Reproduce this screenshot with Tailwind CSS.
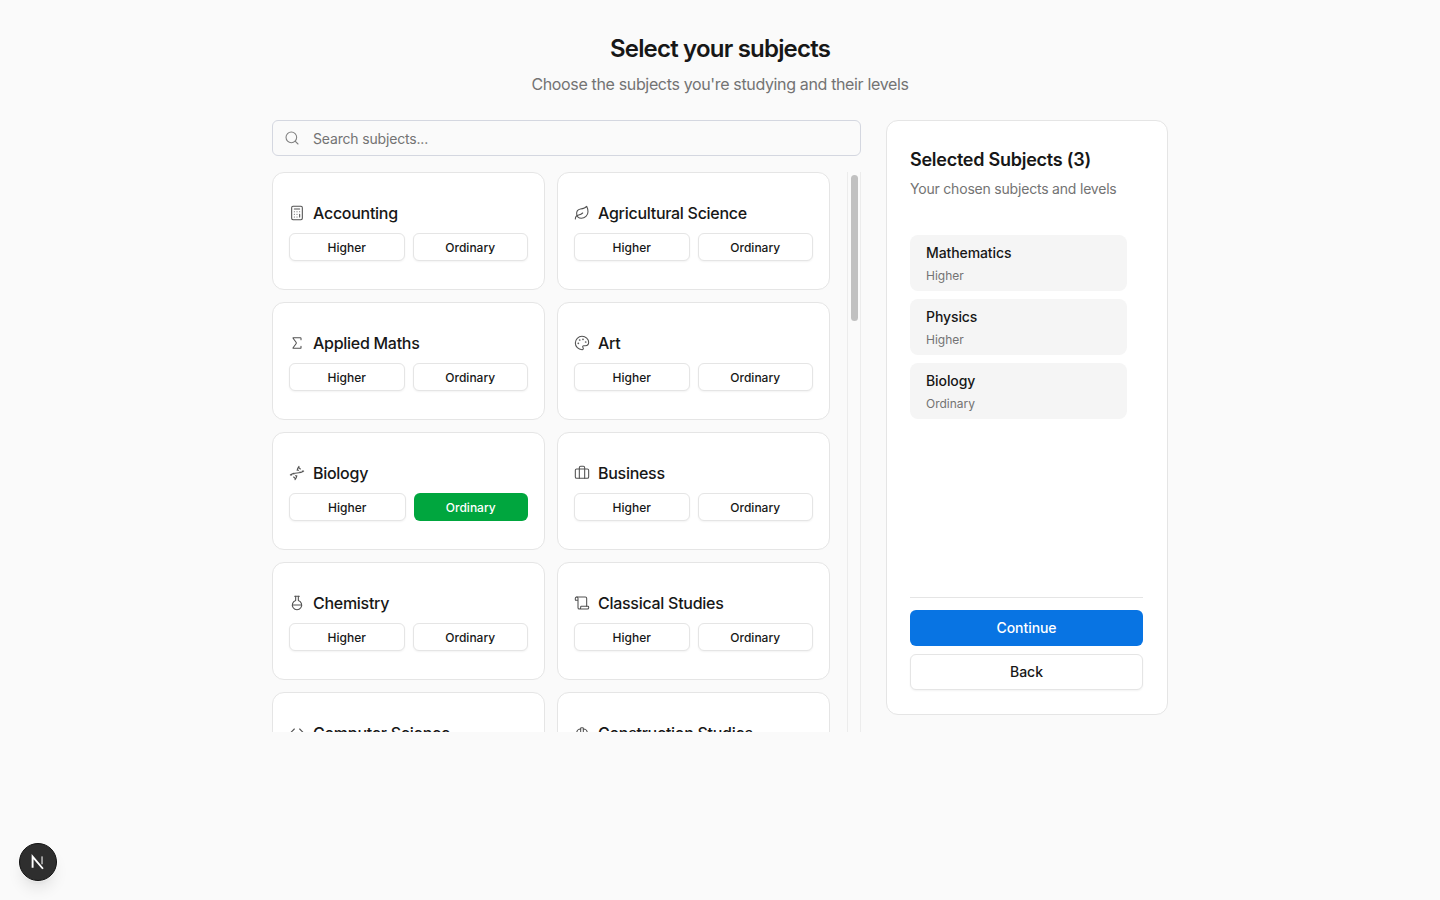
<!DOCTYPE html>
<html lang="en">
<head>
  <meta charset="UTF-8" />
  <meta name="viewport" content="width=device-width, initial-scale=1.0" />
  <title>Select your subjects</title>
  <script src="https://cdn.jsdelivr.net/npm/@tailwindcss/browser@4"></script>
</head>
<body class="bg-[#fafafa] font-['Inter',sans-serif] text-[#171717]">

  <main class="w-[896px] h-[900px] mx-auto pt-[33px]">

    <!-- Title -->
    <header class="text-center mb-6">
      <h1 class="text-2xl font-semibold leading-8 tracking-[-0.8px]">Select your subjects</h1>
      <p class="mt-[7px] text-base leading-6 tracking-[-0.35px] text-[#737373]">Choose the subjects you're studying and their levels</p>
    </header>

    <div class="flex items-start gap-[25px]">

      <!-- Subject picker -->
      <section class="w-[589px] shrink-0">
        <div class="flex items-center h-9 mb-4 pl-[11px] pr-3 border border-[#d4d7e0] rounded-md">
          <svg class="size-4 shrink-0 text-[#808080]" viewBox="0 0 24 24" fill="none" stroke="currentColor" stroke-width="1.6" stroke-linecap="round" stroke-linejoin="round"><path d="m21 21-4.34-4.34"/><circle cx="11" cy="11" r="8"/></svg>
          <input type="text" placeholder="Search subjects..." class="ml-[13px] pt-[2px] flex-1 bg-transparent text-sm tracking-[-0.17px] outline-none placeholder:text-[#737373]" />
        </div>

        <div class="flex h-[560px]">
          <div class="flex-1 min-w-0 overflow-hidden pr-[17px]">
            <div id="subjects" class="grid grid-cols-2 gap-3"></div>
          </div>
          <!-- Scrollbar -->
          <div class="w-[14px] shrink-0 pl-[3px] pr-[2px] pt-[3px] border-x border-[#ececec]">
            <div class="h-[146px] rounded-full bg-[#c1c1c1]"></div>
          </div>
        </div>
      </section>

      <!-- Selected subjects -->
      <aside class="flex flex-col w-[282px] h-[595px] pl-[23px] pr-6 pt-[25px] pb-6 bg-white border border-[#e5e5e5] rounded-xl">
        <h2 class="text-lg font-semibold leading-7 tracking-[-0.25px]">Selected Subjects (3)</h2>
        <p class="mt-[5px] text-sm leading-5 tracking-[-0.2px] text-[#737373]">Your chosen subjects and levels</p>

        <ul class="flex-1 mt-[36px] space-y-2">
          <li class="w-[217px] h-14 px-4 pt-2 bg-[#f5f5f5] rounded-lg">
            <p class="text-sm font-medium leading-5 tracking-[-0.1px]">Mathematics</p>
            <p class="mt-[5px] text-xs leading-4 text-[#737373]">Higher</p>
          </li>
          <li class="w-[217px] h-14 px-4 pt-2 bg-[#f5f5f5] rounded-lg">
            <p class="text-sm font-medium leading-5 tracking-[-0.1px]">Physics</p>
            <p class="mt-[5px] text-xs leading-4 text-[#737373]">Higher</p>
          </li>
          <li class="w-[217px] h-14 px-4 pt-2 bg-[#f5f5f5] rounded-lg">
            <p class="text-sm font-medium leading-5 tracking-[-0.1px]">Biology</p>
            <p class="mt-[5px] text-xs leading-4 text-[#737373]">Ordinary</p>
          </li>
        </ul>

        <div class="pt-3 border-t border-[#e5e5e5] space-y-2">
          <button class="block w-full h-9 rounded-md bg-[#0874e3] text-sm font-medium tracking-[-0.05px] text-white">Continue</button>
          <button class="block w-full h-9 rounded-md bg-white border border-[#e5e5e5] shadow-xs text-sm font-medium tracking-[-0.05px]">Back</button>
        </div>
      </aside>
    </div>
  </main>

  <!-- Next.js dev badge -->
  <div class="fixed left-[19px] bottom-[19px] flex items-center justify-center size-[38px] rounded-full bg-[#2e2e2e] border border-[#111] ring-1 ring-white/30 shadow-lg">
    <svg class="size-[18px]" viewBox="0 0 16 16" fill="none" stroke-width="1.7">
      <path d="M3.2 13V3.2L12.4 14" stroke="#fff"/>
      <path d="M11.6 3v7" stroke="#fff" stroke-opacity=".55"/>
    </svg>
  </div>

  <script>
    const icons = {
      calculator: '<rect width="16" height="20" x="4" y="2" rx="2"/><path d="M8 6h8M16 14v4M16 10h.01M12 10h.01M8 10h.01M12 14h.01M8 14h.01M12 18h.01M8 18h.01"/>',
      leaf: '<path d="M11 20A7 7 0 0 1 9.8 6.1C15.5 5 17 4.48 19 2c1 2 2 4.18 2 8 0 5.5-4.78 10-10 10Z"/><path d="M2 21c0-3 1.85-5.36 5.08-6C9.5 14.52 12 13 13 12"/>',
      sigma: '<path d="M18 7V5a1 1 0 0 0-1-1H6.5a.5.5 0 0 0-.4.8l4.5 6a2 2 0 0 1 0 2.4l-4.5 6a.5.5 0 0 0 .4.8H17a1 1 0 0 0 1-1v-2"/>',
      palette: '<path d="M12 22a1 1 0 0 1 0-20 10 9 0 0 1 10 9 5 5 0 0 1-5 5h-2.25a1.75 1.75 0 0 0-1.4 2.8l.3.4a1.75 1.75 0 0 1-1.4 2.8z"/><circle cx="13.5" cy="6.5" r=".5"/><circle cx="17.5" cy="10.5" r=".5"/><circle cx="6.5" cy="12.5" r=".5"/><circle cx="8.5" cy="7.5" r=".5"/>',
      dna: '<path d="m10 16 1.5 1.5M14 8l-1.5-1.5M15 2c-1.798 1.998-2.518 3.995-2.807 5.993M16.5 10.5l1 1M17 6l-2.891-2.891M2 15c6.667-6 13.333 0 20-6M20 9l.891.891M3.109 14.109 4 15M6.5 12.5l1 1M7 18l2.891 2.891M9 22c1.798-1.998 2.518-3.995 2.807-5.993"/>',
      briefcase: '<path d="M16 20V4a2 2 0 0 0-2-2h-4a2 2 0 0 0-2 2v16"/><rect width="20" height="14" x="2" y="6" rx="2"/>',
      flask: '<path d="M10 2v6.292a7 7 0 1 0 4 0V2"/><path d="M5 15h14"/><path d="M8.5 2h7"/>',
      scroll: '<path d="M19 17V5a2 2 0 0 0-2-2H4"/><path d="M8 21h12a2 2 0 0 0 2-2v-1a1 1 0 0 0-1-1H11a1 1 0 0 0-1 1v1a2 2 0 1 1-4 0V5a2 2 0 1 0-4 0v2a1 1 0 0 0 1 1h3"/>',
      code: '<path d="m16 18 6-6-6-6"/><path d="m8 6-6 6 6 6"/>',
      hardhat: '<path d="M10 10V5a1 1 0 0 1 1-1h2a1 1 0 0 1 1 1v5"/><path d="M14 6a6 6 0 0 1 6 6v3"/><path d="M4 15v-3a6 6 0 0 1 6-6"/><rect x="2" y="15" width="20" height="4" rx="1"/>'
    };

    const subjects = [
      { name: "Accounting", icon: "calculator" },
      { name: "Agricultural Science", icon: "leaf" },
      { name: "Applied Maths", icon: "sigma" },
      { name: "Art", icon: "palette" },
      { name: "Biology", icon: "dna", level: "Ordinary" },
      { name: "Business", icon: "briefcase" },
      { name: "Chemistry", icon: "flask" },
      { name: "Classical Studies", icon: "scroll" },
      { name: "Computer Science", icon: "code" },
      { name: "Construction Studies", icon: "hardhat" }
    ];

    const levelButton = (label, active) => active
      ? `<button class="flex-1 h-7 px-3 pt-[2px] rounded-md bg-[#00a63e] text-xs font-medium text-white">${label}</button>`
      : `<button class="flex-1 h-7 px-3 pt-[2px] rounded-md bg-white border border-[#e5e5e5] shadow-xs text-xs font-medium">${label}</button>`;

    document.getElementById("subjects").innerHTML = subjects.map(s => `
      <article class="h-[118px] px-4 py-7 bg-white border border-[#e5e5e5] rounded-xl">
        <div class="flex items-center gap-2 h-6 mb-2">
          <svg class="size-4 shrink-0 text-[#525252]" viewBox="0 0 24 24" fill="none" stroke="currentColor" stroke-width="1.6" stroke-linecap="round" stroke-linejoin="round">${icons[s.icon]}</svg>
          <h3 class="text-base font-medium leading-6 tracking-[-0.28px]">${s.name}</h3>
        </div>
        <div class="flex gap-2">
          ${levelButton("Higher", s.level === "Higher")}
          ${levelButton("Ordinary", s.level === "Ordinary")}
        </div>
      </article>`).join("");
  </script>

</body>
</html>
